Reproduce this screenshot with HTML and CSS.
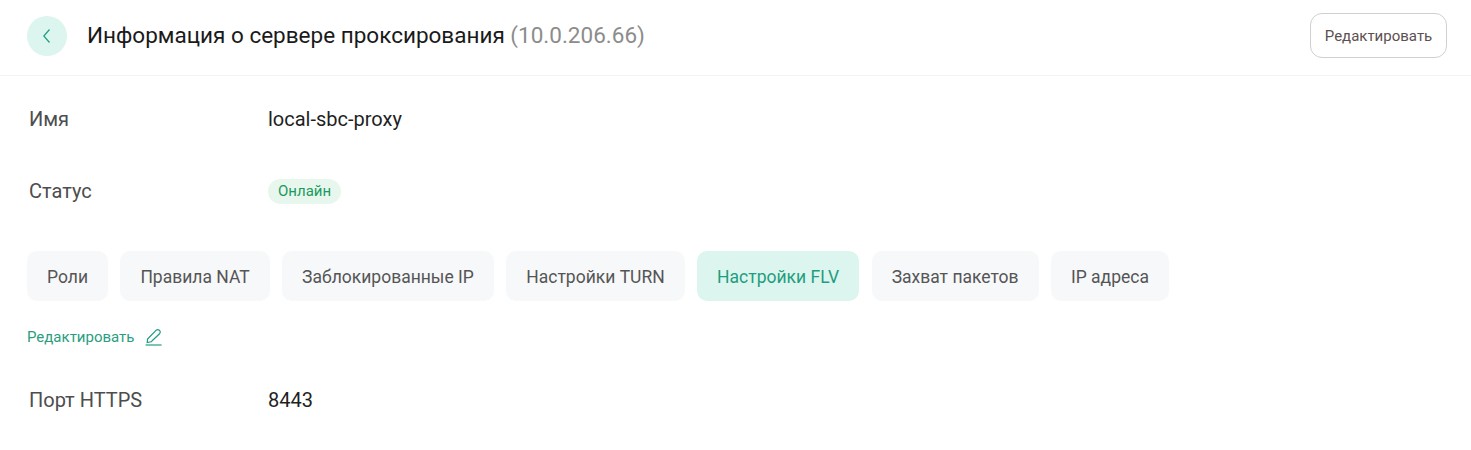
FILE: index.html
```html
<!DOCTYPE html>
<html lang="ru">
<head>
    <meta charset="UTF-8">
    <title>Информация о сервере проксирования</title>
    <link rel="stylesheet" href="styles.css">
</head>
<body>

<div class="header">
    <div class="header-left">
        <button class="back-btn" aria-label="Назад">
            <svg width="10" height="16" viewBox="0 0 10 16" fill="none"><path d="M7.5 1.5 L1.8 8 L7.5 14.5" stroke="#1f9d80" stroke-width="1.2"/></svg>
        </button>
        <h1 class="title">Информация о сервере проксирования <span class="title-ip">(10.0.206.66)</span></h1>
    </div>
    <button class="edit-btn">Редактировать</button>
</div>

<div class="content">
    <div class="row row-name">
        <div class="row-label">Имя</div>
        <div class="row-value">local-sbc-proxy</div>
    </div>
    <div class="row row-status">
        <div class="row-label">Статус</div>
        <div class="row-value"><span class="badge">Онлайн</span></div>
    </div>

    <div class="tabs">
        <div class="tab">Роли</div>
        <div class="tab">Правила NAT</div>
        <div class="tab">Заблокированные IP</div>
        <div class="tab">Настройки TURN</div>
        <div class="tab active">Настройки FLV</div>
        <div class="tab">Захват пакетов</div>
        <div class="tab">IP адреса</div>
    </div>

    <a class="edit-link">Редактировать
        <svg width="18" height="18" viewBox="0 0 18 18" fill="none" stroke="#1f9d80" stroke-width="1.2"><path d="M2.6 11 L11 2.4 Q12.6 0.9 14.4 2.2 Q16 3.8 14.8 5.5 L6.2 13.8 L2.2 14.6 Z"/><path d="M0.6 17 H16.6"/></svg>
    </a>

    <div class="row row-port">
        <div class="row-label">Порт HTTPS</div>
        <div class="row-value">8443</div>
    </div>
</div>

</body>
</html>
```

FILE: styles.css
```css
body {
    margin: 0;
    font-family: Roboto, sans-serif;
    background-color: #fff;
    color: #1f1f1f;
}

.header {
    display: flex;
    justify-content: space-between;
    align-items: center;
    height: 71px;
    padding: 0 24px 4px 27px;
    border-bottom: 1px solid #f2f3f5;
}

.header-left {
    display: flex;
    align-items: center;
}

.back-btn {
    display: flex;
    align-items: center;
    justify-content: center;
    width: 40px;
    height: 40px;
    margin-right: 20px;
    padding: 0;
    border: none;
    border-radius: 50%;
    background-color: #dcf5ee;
}

.title {
    margin: 0 0 2px;
    font-size: 22.5px;
    font-weight: 400;
    color: #1a1a1a;
}

.title-ip {
    color: #8c8c8c;
}

.edit-btn {
    width: 137px;
    height: 45px;
    padding: 0;
    border: 1px solid #d0d0d0;
    border-radius: 12px;
    background-color: #fff;
    font-family: Roboto, sans-serif;
    font-size: 15px;
    color: #5c5050;
}

.content {
    padding: 0 27px;
}

.row {
    display: flex;
    align-items: center;
    font-size: 20px;
}

.row-label {
    width: 239px;
    padding-left: 2px;
    color: #4d4d4d;
}

.row-value {
    color: #1f1f1f;
}

.row-name {
    height: 30px;
    margin-top: 28px;
}

.row-status {
    height: 30px;
    margin-top: 42px;
}

.badge {
    display: block;
    padding: 0 10px;
    height: 25px;
    line-height: 25px;
    border-radius: 13px;
    background-color: #e8f7ee;
    color: #1a9a5c;
    font-size: 15px;
}

.tabs {
    display: flex;
    gap: 12.4px;
    margin-top: 45px;
}

.tab {
    height: 50px;
    line-height: 52px;
    padding: 0 20px;
    border-radius: 10px;
    background-color: #f7f8fa;
    font-size: 17.5px;
    color: #555;
}

.tab.active {
    background-color: #dcf5ee;
    color: #1f9d80;
}

.edit-link {
    display: flex;
    align-items: center;
    gap: 11px;
    margin-top: 26px;
    height: 20px;
    font-size: 15px;
    color: #2a9d80;
}

.row-port {
    height: 30px;
    margin-top: 38px;
}
```
